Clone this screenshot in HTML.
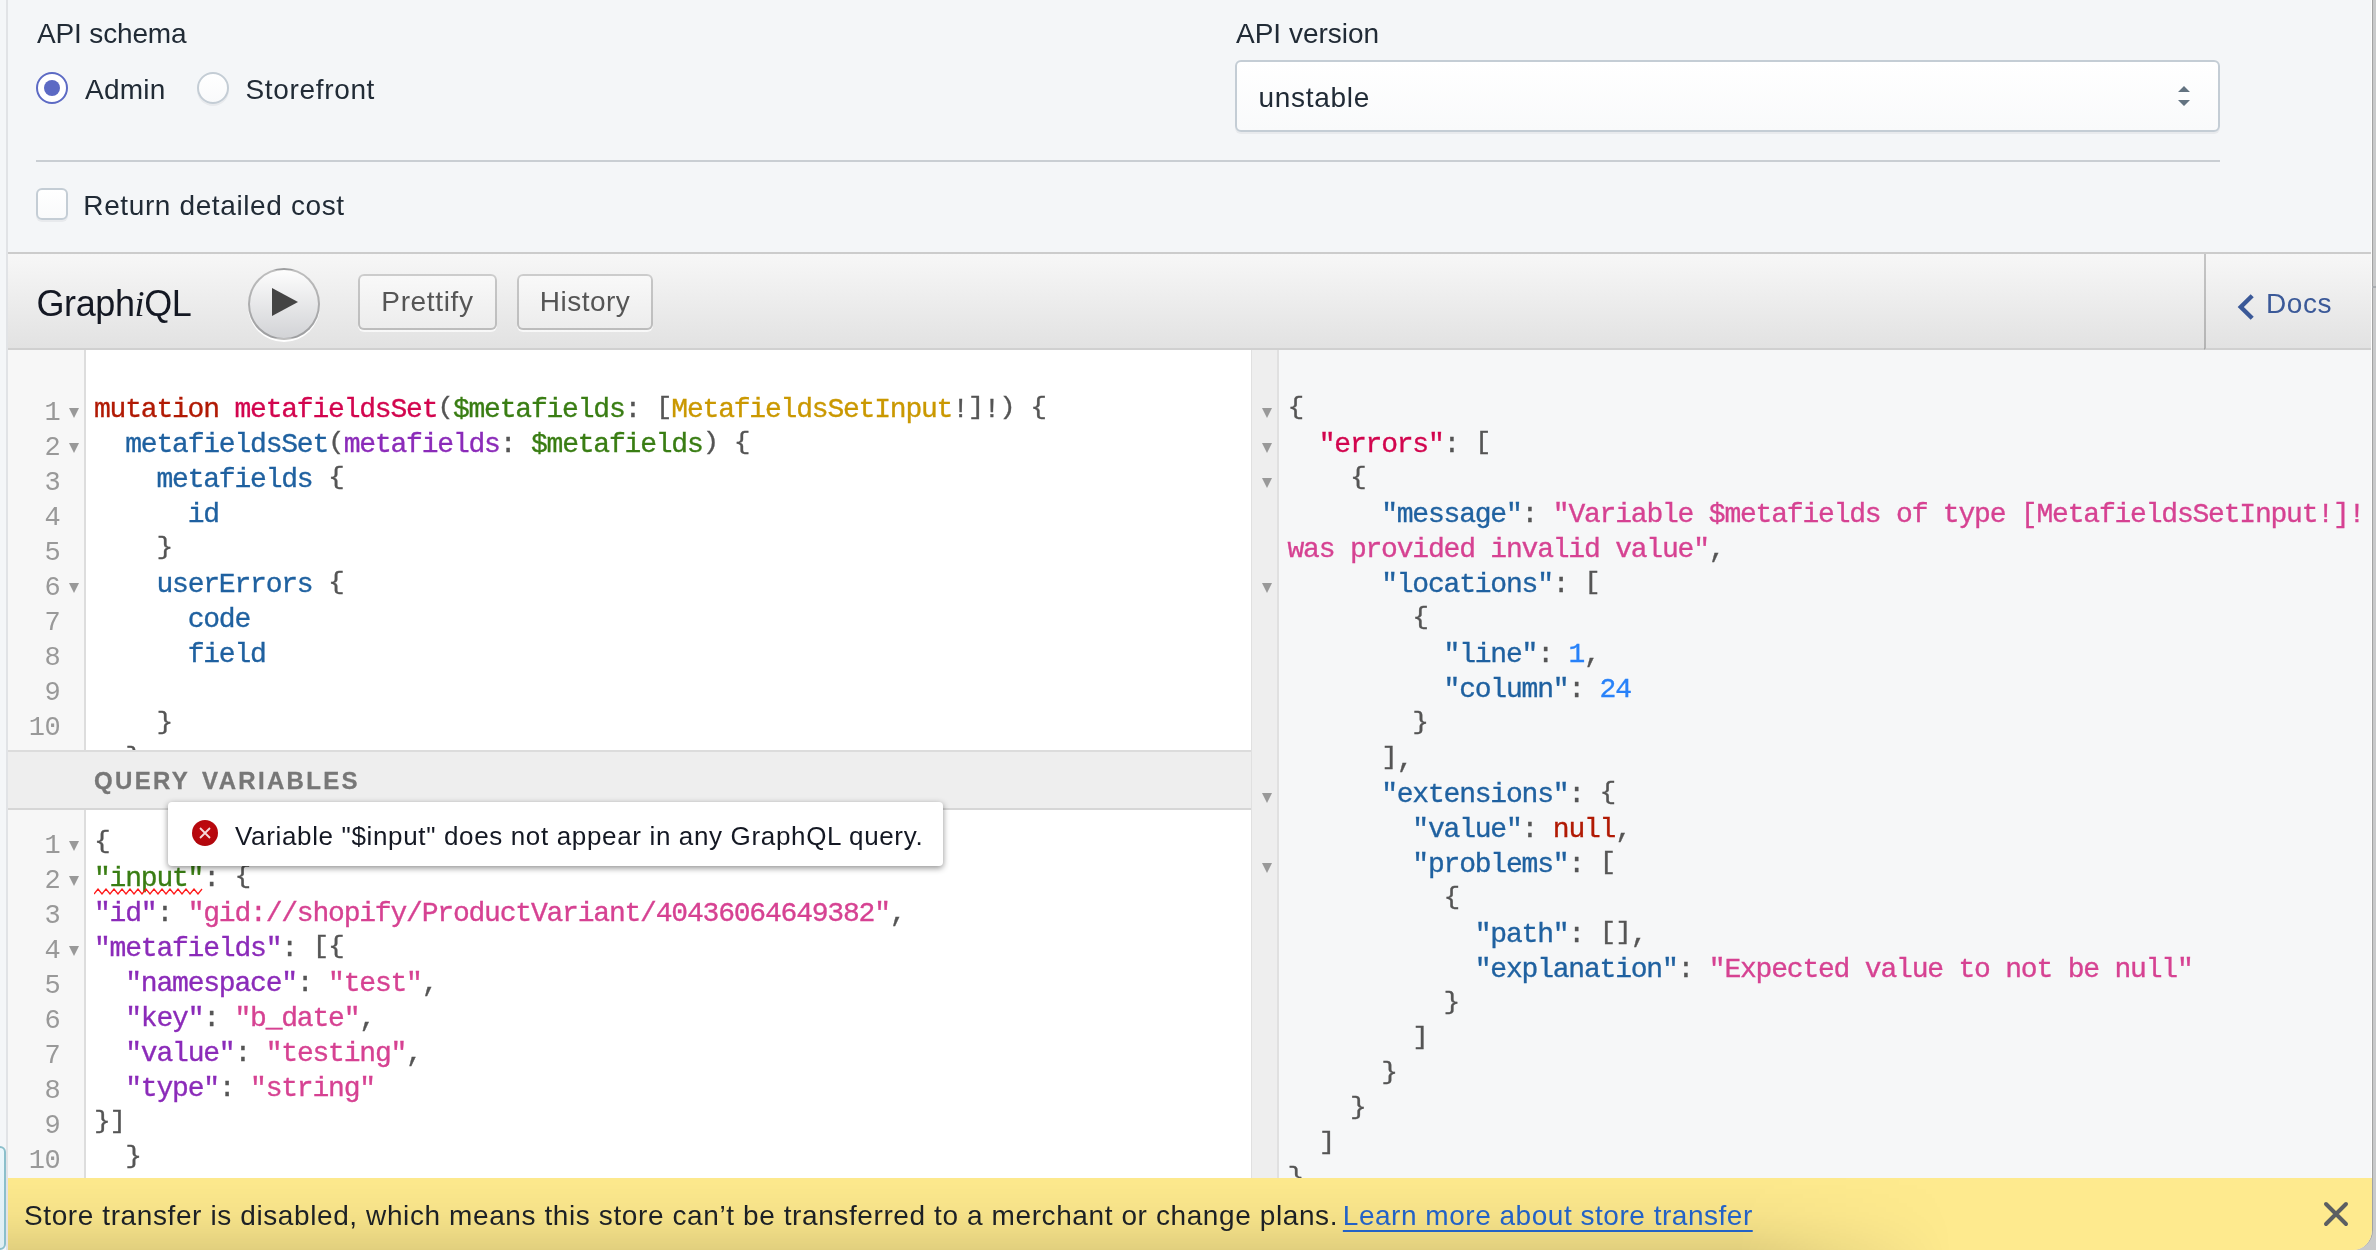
<!DOCTYPE html>
<html lang="en">
<head>
<meta charset="utf-8">
<title>GraphiQL</title>
<style>
html,body{margin:0;padding:0}
body{width:2376px;height:1250px;overflow:hidden;position:relative;background:#c9cacb;font-family:"Liberation Sans",Arial,sans-serif;color:#212b36}
#win{will-change:transform;position:absolute;left:0;top:0;width:2372px;height:1250px;background:#f4f6f8;border-right:1px solid #a2a2a2;border-bottom-right-radius:20px;overflow:hidden}
.abs{position:absolute}
.t{position:absolute;white-space:nowrap;font-size:28px;line-height:32px;color:#212b36}
#lborder{position:absolute;left:6px;top:0;width:2px;height:1250px;background:#e1e3e6}
#redge{position:absolute;left:2371px;top:0;width:1px;height:1178px;background:#fdfdfd}
#rtick{position:absolute;left:2372px;top:286px;width:4px;height:2px;background:#a9acb0}
#bluebox{position:absolute;left:-10px;top:1146px;width:11.7px;height:100px;border:2px solid #8bbfcb;border-radius:6px;background:linear-gradient(#ebf7fc,#dfeef3)}

/* polaris controls */
.radio{position:absolute;width:28px;height:28px;border:2px solid #c4cdd5;border-radius:50%;background:linear-gradient(#fff,#f9fafb);box-shadow:0 2px 0 rgba(22,29,37,.05)}
.radio.on{border-color:#5c6ac4;background:#fff;box-shadow:none}
.radio.on:after{content:"";position:absolute;left:6px;top:6px;width:16px;height:16px;border-radius:50%;background:#5c6ac4}
.check{position:absolute;width:28px;height:28px;border:2px solid #c4cdd5;border-radius:6px;background:linear-gradient(#fff,#f9fafb);box-shadow:0 2px 0 rgba(22,29,37,.05)}
#select{position:absolute;left:1235px;top:60px;width:981px;height:68px;border:2px solid #c4cdd5;border-radius:6px;background:linear-gradient(#fff,#f9fafb);box-shadow:0 2px 0 rgba(22,29,37,.05)}
#hr{position:absolute;left:36px;top:160px;width:2184px;height:2px;background:#c9ced3}

/* graphiql */
#gtop{position:absolute;left:8px;top:252px;width:2364px;height:2px;background:#cccccc}
#bar{position:absolute;left:8px;top:254px;width:2364px;height:94px;background:linear-gradient(#f7f7f7,#e2e2e2);border-bottom:2px solid #d0d0d0}
#title{position:absolute;left:36.5px;top:282px;font-size:36px;line-height:44px;color:#141823;white-space:nowrap}
#title em{font-family:"Liberation Serif",serif;font-style:italic}
#exec{position:absolute;left:248px;top:268px;width:68px;height:68px;border-radius:50%;border:2px solid rgba(0,0,0,.25);background:linear-gradient(#fdfdfd,#d2d3d6);box-shadow:0 2px 0 #fff}
#exec svg{position:absolute;left:0;top:0}
.tb{position:absolute;top:274.3px;height:55.8px;text-align:center;border-radius:6px;background:linear-gradient(#f9f9f9,#ececec);box-shadow:inset 0 0 0 2px rgba(0,0,0,.2),0 2px 0 rgba(255,255,255,.7),inset 0 2px #fff;color:#555;font-size:28px;line-height:40px;box-sizing:border-box;padding:7.5px 0 0;white-space:nowrap}
#docs{position:absolute;left:2204px;top:254px;width:166px;height:94px;border-left:2px solid rgba(0,0,0,.2);border-bottom:2px solid #d0d0d0;background:linear-gradient(#f7f7f7,#e2e2e2);color:#3b5998;font-size:28px}
#docs svg{position:absolute;left:26px;top:34px}
#docs .dt{position:absolute;left:60px;top:30px;line-height:40px;white-space:nowrap;letter-spacing:.6px}

.ed{position:absolute;overflow:hidden;background:#fff}
.gut{position:absolute;left:0;top:0;bottom:0;width:76px;background:#f7f7f7;border-right:2px solid #ddd}
.cl{position:absolute;-webkit-text-stroke:.35px;white-space:pre;font-family:"Liberation Mono",monospace;font-size:28px;line-height:35px;letter-spacing:-1.2px;color:#000;height:35px}
.ln{position:absolute;margin-top:3.5px;left:0;width:52px;text-align:right;white-space:pre;font-family:"Liberation Mono",monospace;font-size:27px;line-height:35px;letter-spacing:-0.6px;color:#999;height:35px}
.fd{position:absolute;width:0;height:0;border-left:5px solid transparent;border-right:5px solid transparent;border-top:10px solid #999}
.cl b{font-weight:normal;display:inline-block;transform:scaleY(.845);transform-origin:50% 4px}
.k{color:#b11a04}.d{color:#d2054e}.v{color:#397d13}.a{color:#ca9800}.p{color:#1f61a0}.at{color:#8b2bb9}.s{color:#d64292}.n{color:#2882f9}.pu{color:#555}
#vtitle{position:absolute;left:8px;top:750px;width:1243px;height:56px;background:#eee;border-top:2px solid #dcdcdc;border-bottom:2px solid #d6d6d6}
#vtitle span{-webkit-text-stroke:.3px;position:absolute;left:86px;top:13px;font-size:24px;line-height:32px;font-weight:bold;letter-spacing:2.33px;word-spacing:3.4px;color:#777;white-space:nowrap}
#res{position:absolute;left:1251px;top:350px;width:1121px;height:828px;background:#f6f7f8;overflow:hidden}
#rgut{position:absolute;left:0;top:0;bottom:0;width:25px;background:#eee;border-left:1px solid #e0e0e0;border-right:2px solid #e0e0e0}
#tip{position:absolute;left:168px;top:802px;width:775px;height:64px;background:#fff;border-radius:4px;box-shadow:0 2px 6px rgba(0,0,0,.45)}
#tip .tx{position:absolute;left:67px;top:17.5px;font-size:26px;line-height:32px;color:#141823;white-space:nowrap;letter-spacing:.65px}
#tip svg{position:absolute;left:24px;top:18px}
#sq{position:absolute}
#banner{position:absolute;left:8px;top:1178px;width:2364px;height:72px;background:#feea8e}
#bshadow{position:absolute;left:0;top:0;width:1950px;height:72px;background:linear-gradient(to bottom,rgba(0,0,0,.004) 0%,rgba(0,0,0,.035) 50%,rgba(0,0,0,.07) 75%,rgba(0,0,0,.115) 100%);-webkit-mask-image:linear-gradient(to right,#000 0,#000 1730px,transparent 1945px);mask-image:linear-gradient(to right,#000 0,#000 1730px,transparent 1945px)}
#banner .bt{position:absolute;left:16px;top:20px;font-size:28px;line-height:36px;color:#1c2025;white-space:nowrap}
#banner a{color:#2362c6;text-decoration:underline;text-decoration-thickness:2px;text-underline-offset:4.5px}
#banner svg{position:absolute;left:2312px;top:20px}

</style>
</head>
<body>
<div id="win">
<div id="lborder"></div>
<div id="bluebox"></div>

<div class="t" id="l_schema" style="left:37px;top:18px;letter-spacing:-.15px">API schema</div>
<div class="radio on" style="left:36px;top:72px"></div>
<div class="t" id="l_admin" style="left:85px;top:74px;letter-spacing:.25px">Admin</div>
<div class="radio" style="left:197px;top:72px"></div>
<div class="t" id="l_store" style="left:245.5px;top:74px;letter-spacing:.66px">Storefront</div>
<div class="t" id="l_version" style="left:1236px;top:18px">API version</div>
<div id="select"></div>
<div class="t" id="l_unstable" style="left:1258.5px;top:82px;letter-spacing:.7px">unstable</div>
<svg class="abs" style="left:2176px;top:84px" width="16" height="24" viewBox="0 0 16 24"><path d="M2 8 L8 2 L14 8 Z M2 16 L14 16 L8 22 Z" fill="#637381"/></svg>
<div id="hr"></div>
<div class="check" style="left:36px;top:188px"></div>
<div class="t" id="l_cost" style="left:83.3px;top:190px;letter-spacing:.62px">Return detailed cost</div>

<div id="gtop"></div>
<div id="bar"></div>
<div id="title" style="letter-spacing:-.4px">Graph<em>i</em>QL</div>
<div id="exec"><svg width="68" height="68" viewBox="0 0 34 34"><path d="M 11 9 L 24 16 L 11 23 z" fill="#444"/></svg></div>
<div class="tb" id="b_pret" style="left:358.3px;width:138.4px"><span id="t_pret" style="letter-spacing:.65px">Prettify</span></div>
<div class="tb" id="b_hist" style="left:517.4px;width:135.3px"><span id="t_hist" style="letter-spacing:.5px">History</span></div>
<div id="docs"><svg width="28" height="40" viewBox="0 0 28 40"><path d="M20.2 7.8 L8.8 19 L20.2 30.2" fill="none" stroke="#3b5998" stroke-width="4.4" stroke-linejoin="miter"/></svg><div class="dt" id="t_docs">Docs</div></div>

<div class="ed" id="qed" style="left:8px;top:350px;width:1243px;height:400px">
<div class="gut"></div>
<div class="ln" style="top:42px">1</div>
<div class="ln" style="top:77px">2</div>
<div class="ln" style="top:112px">3</div>
<div class="ln" style="top:147px">4</div>
<div class="ln" style="top:182px">5</div>
<div class="ln" style="top:217px">6</div>
<div class="ln" style="top:252px">7</div>
<div class="ln" style="top:287px">8</div>
<div class="ln" style="top:322px">9</div>
<div class="ln" style="top:357px">10</div>
<i class="fd" style="left:60.8px;top:57.9px"></i>
<i class="fd" style="left:60.8px;top:92.9px"></i>
<i class="fd" style="left:60.8px;top:232.9px"></i>
<div class="cl " style="left:86px;top:42px"><span class="k">mutation</span> <span class="d">metafieldsSet</span><span class="pu"><b>(</b></span><span class="v">$metafields</span><span class="pu">:</span> <span class="pu"><b>[</b></span><span class="a">MetafieldsSetInput</span><span class="pu">!<b>]</b>!<b>)</b></span> <span class="pu"><b>{</b></span></div>
<div class="cl " style="left:86px;top:77px">  <span class="p">metafieldsSet</span><span class="pu"><b>(</b></span><span class="at">metafields</span><span class="pu">:</span> <span class="v">$metafields</span><span class="pu"><b>)</b></span> <span class="pu"><b>{</b></span></div>
<div class="cl " style="left:86px;top:112px">    <span class="p">metafields</span> <span class="pu"><b>{</b></span></div>
<div class="cl " style="left:86px;top:147px">      <span class="p">id</span></div>
<div class="cl " style="left:86px;top:182px">    <span class="pu"><b>}</b></span></div>
<div class="cl " style="left:86px;top:217px">    <span class="p">userErrors</span> <span class="pu"><b>{</b></span></div>
<div class="cl " style="left:86px;top:252px">      <span class="p">code</span></div>
<div class="cl " style="left:86px;top:287px">      <span class="p">field</span></div>
<div class="cl " style="left:86px;top:322px"></div>
<div class="cl " style="left:86px;top:357px">    <span class="pu"><b>}</b></span></div>
<div class="cl " style="left:86px;top:392px">  <span class="pu"><b>}</b></span></div>
</div>
<div id="vtitle"><span id="t_qv">QUERY VARIABLES</span></div>
<div class="ed" id="ved" style="left:8px;top:810px;width:1243px;height:368px">
<div class="gut"></div>
<div class="ln" style="top:15.5px">1</div>
<div class="ln" style="top:50.5px">2</div>
<div class="ln" style="top:85.5px">3</div>
<div class="ln" style="top:120.5px">4</div>
<div class="ln" style="top:155.5px">5</div>
<div class="ln" style="top:190.5px">6</div>
<div class="ln" style="top:225.5px">7</div>
<div class="ln" style="top:260.5px">8</div>
<div class="ln" style="top:295.5px">9</div>
<div class="ln" style="top:330.5px">10</div>
<i class="fd" style="left:60.8px;top:31.4px"></i>
<i class="fd" style="left:60.8px;top:66.4px"></i>
<i class="fd" style="left:60.8px;top:136.4px"></i>
<div class="cl " style="left:86px;top:15.5px"><span class="pu"><b>{</b></span></div>
<div class="cl " style="left:86px;top:50.5px"><span class="v sq">"input"</span><span class="pu">:</span> <span class="pu"><b>{</b></span></div>
<div class="cl " style="left:86px;top:85.5px"><span class="at">"id"</span><span class="pu">:</span> <span class="s">"gid://shopify/ProductVariant/40436064649382"</span><span class="pu">,</span></div>
<div class="cl " style="left:86px;top:120.5px"><span class="at">"metafields"</span><span class="pu">:</span> <span class="pu"><b>[</b><b>{</b></span></div>
<div class="cl " style="left:86px;top:155.5px">  <span class="at">"namespace"</span><span class="pu">:</span> <span class="s">"test"</span><span class="pu">,</span></div>
<div class="cl " style="left:86px;top:190.5px">  <span class="at">"key"</span><span class="pu">:</span> <span class="s">"b_date"</span><span class="pu">,</span></div>
<div class="cl " style="left:86px;top:225.5px">  <span class="at">"value"</span><span class="pu">:</span> <span class="s">"testing"</span><span class="pu">,</span></div>
<div class="cl " style="left:86px;top:260.5px">  <span class="at">"type"</span><span class="pu">:</span> <span class="s">"string"</span></div>
<div class="cl " style="left:86px;top:295.5px"><span class="pu"><b>}</b><b>]</b></span></div>
<div class="cl " style="left:86px;top:330.5px">  <span class="pu"><b>}</b></span></div>
<svg id="sq" style="left:86px;top:78px" width="110" height="7" viewBox="0 0 110 7"><path d="M0 6 L4 1 L8 6 L12 1 L16 6 L20 1 L24 6 L28 1 L32 6 L36 1 L40 6 L44 1 L48 6 L52 1 L56 6 L60 1 L64 6 L68 1 L72 6 L76 1 L80 6 L84 1 L88 6 L92 1 L96 6 L100 1 L104 6 L108 1" fill="none" stroke="#ff1a1a" stroke-width="1.3"/></svg>
</div>
<div id="res">
<div id="rgut"></div>
<i class="fd" style="left:11px;top:57.9px"></i>
<i class="fd" style="left:11px;top:92.9px"></i>
<i class="fd" style="left:11px;top:127.9px"></i>
<i class="fd" style="left:11px;top:232.9px"></i>
<i class="fd" style="left:11px;top:442.9px"></i>
<i class="fd" style="left:11px;top:512.9px"></i>
<div class="cl " style="left:36.5px;top:42px"><span class="pu"><b>{</b></span></div>
<div class="cl " style="left:36.5px;top:77px">  <span class="d">"errors"</span><span class="pu">:</span> <span class="pu"><b>[</b></span></div>
<div class="cl " style="left:36.5px;top:112px">    <span class="pu"><b>{</b></span></div>
<div class="cl " style="left:36.5px;top:147px">      <span class="p">"message"</span><span class="pu">:</span> <span class="s">"Variable $metafields of type [MetafieldsSetInput!]!</span></div>
<div class="cl " style="left:36.5px;top:182px"><span class="s">was provided invalid value"</span><span class="pu">,</span></div>
<div class="cl " style="left:36.5px;top:217px">      <span class="p">"locations"</span><span class="pu">:</span> <span class="pu"><b>[</b></span></div>
<div class="cl " style="left:36.5px;top:252px">        <span class="pu"><b>{</b></span></div>
<div class="cl " style="left:36.5px;top:287px">          <span class="p">"line"</span><span class="pu">:</span> <span class="n">1</span><span class="pu">,</span></div>
<div class="cl " style="left:36.5px;top:322px">          <span class="p">"column"</span><span class="pu">:</span> <span class="n">24</span></div>
<div class="cl " style="left:36.5px;top:357px">        <span class="pu"><b>}</b></span></div>
<div class="cl " style="left:36.5px;top:392px">      <span class="pu"><b>]</b>,</span></div>
<div class="cl " style="left:36.5px;top:427px">      <span class="p">"extensions"</span><span class="pu">:</span> <span class="pu"><b>{</b></span></div>
<div class="cl " style="left:36.5px;top:462px">        <span class="p">"value"</span><span class="pu">:</span> <span class="k">null</span><span class="pu">,</span></div>
<div class="cl " style="left:36.5px;top:497px">        <span class="p">"problems"</span><span class="pu">:</span> <span class="pu"><b>[</b></span></div>
<div class="cl " style="left:36.5px;top:532px">          <span class="pu"><b>{</b></span></div>
<div class="cl " style="left:36.5px;top:567px">            <span class="p">"path"</span><span class="pu">:</span> <span class="pu"><b>[</b><b>]</b>,</span></div>
<div class="cl " style="left:36.5px;top:602px">            <span class="p">"explanation"</span><span class="pu">:</span> <span class="s">"Expected value to not be null"</span></div>
<div class="cl " style="left:36.5px;top:637px">          <span class="pu"><b>}</b></span></div>
<div class="cl " style="left:36.5px;top:672px">        <span class="pu"><b>]</b></span></div>
<div class="cl " style="left:36.5px;top:707px">      <span class="pu"><b>}</b></span></div>
<div class="cl " style="left:36.5px;top:742px">    <span class="pu"><b>}</b></span></div>
<div class="cl " style="left:36.5px;top:777px">  <span class="pu"><b>]</b></span></div>
<div class="cl " style="left:36.5px;top:812px"><span class="pu"><b>}</b></span></div>
</div>

<div id="tip">
<svg width="28" height="28" viewBox="0 0 28 28"><defs><radialGradient id="rg" cx="50%" cy="40%" r="60%"><stop offset="0" stop-color="#c3090f"/><stop offset="1" stop-color="#b0070d"/></radialGradient></defs><circle cx="13" cy="13" r="13" fill="url(#rg)"/><path d="M8 8 L18 18 M18 8 L8 18" stroke="#fff" stroke-opacity=".85" stroke-width="1.8" fill="none"/></svg>
<div class="tx" id="t_tip">Variable "$input" does not appear in any GraphQL query.</div>
</div>

<div id="banner">
<div id="bshadow"></div>
<div class="bt"><span id="bt1" style="letter-spacing:.6px">Store transfer is disabled, which means this store can’t be transferred to a merchant or change plans.</span> <a id="bt2" style="letter-spacing:.52px;margin-left:-3px">Learn more about store transfer</a></div>
<svg width="32" height="32" viewBox="0 0 32 32"><path d="M6 6 L26 26 M26 6 L6 26" stroke="#5c5f62" stroke-width="4" stroke-linecap="round" fill="none"/></svg>
</div>
<div id="redge"></div>
</div>
<div id="rtick"></div>

</body>
</html>
